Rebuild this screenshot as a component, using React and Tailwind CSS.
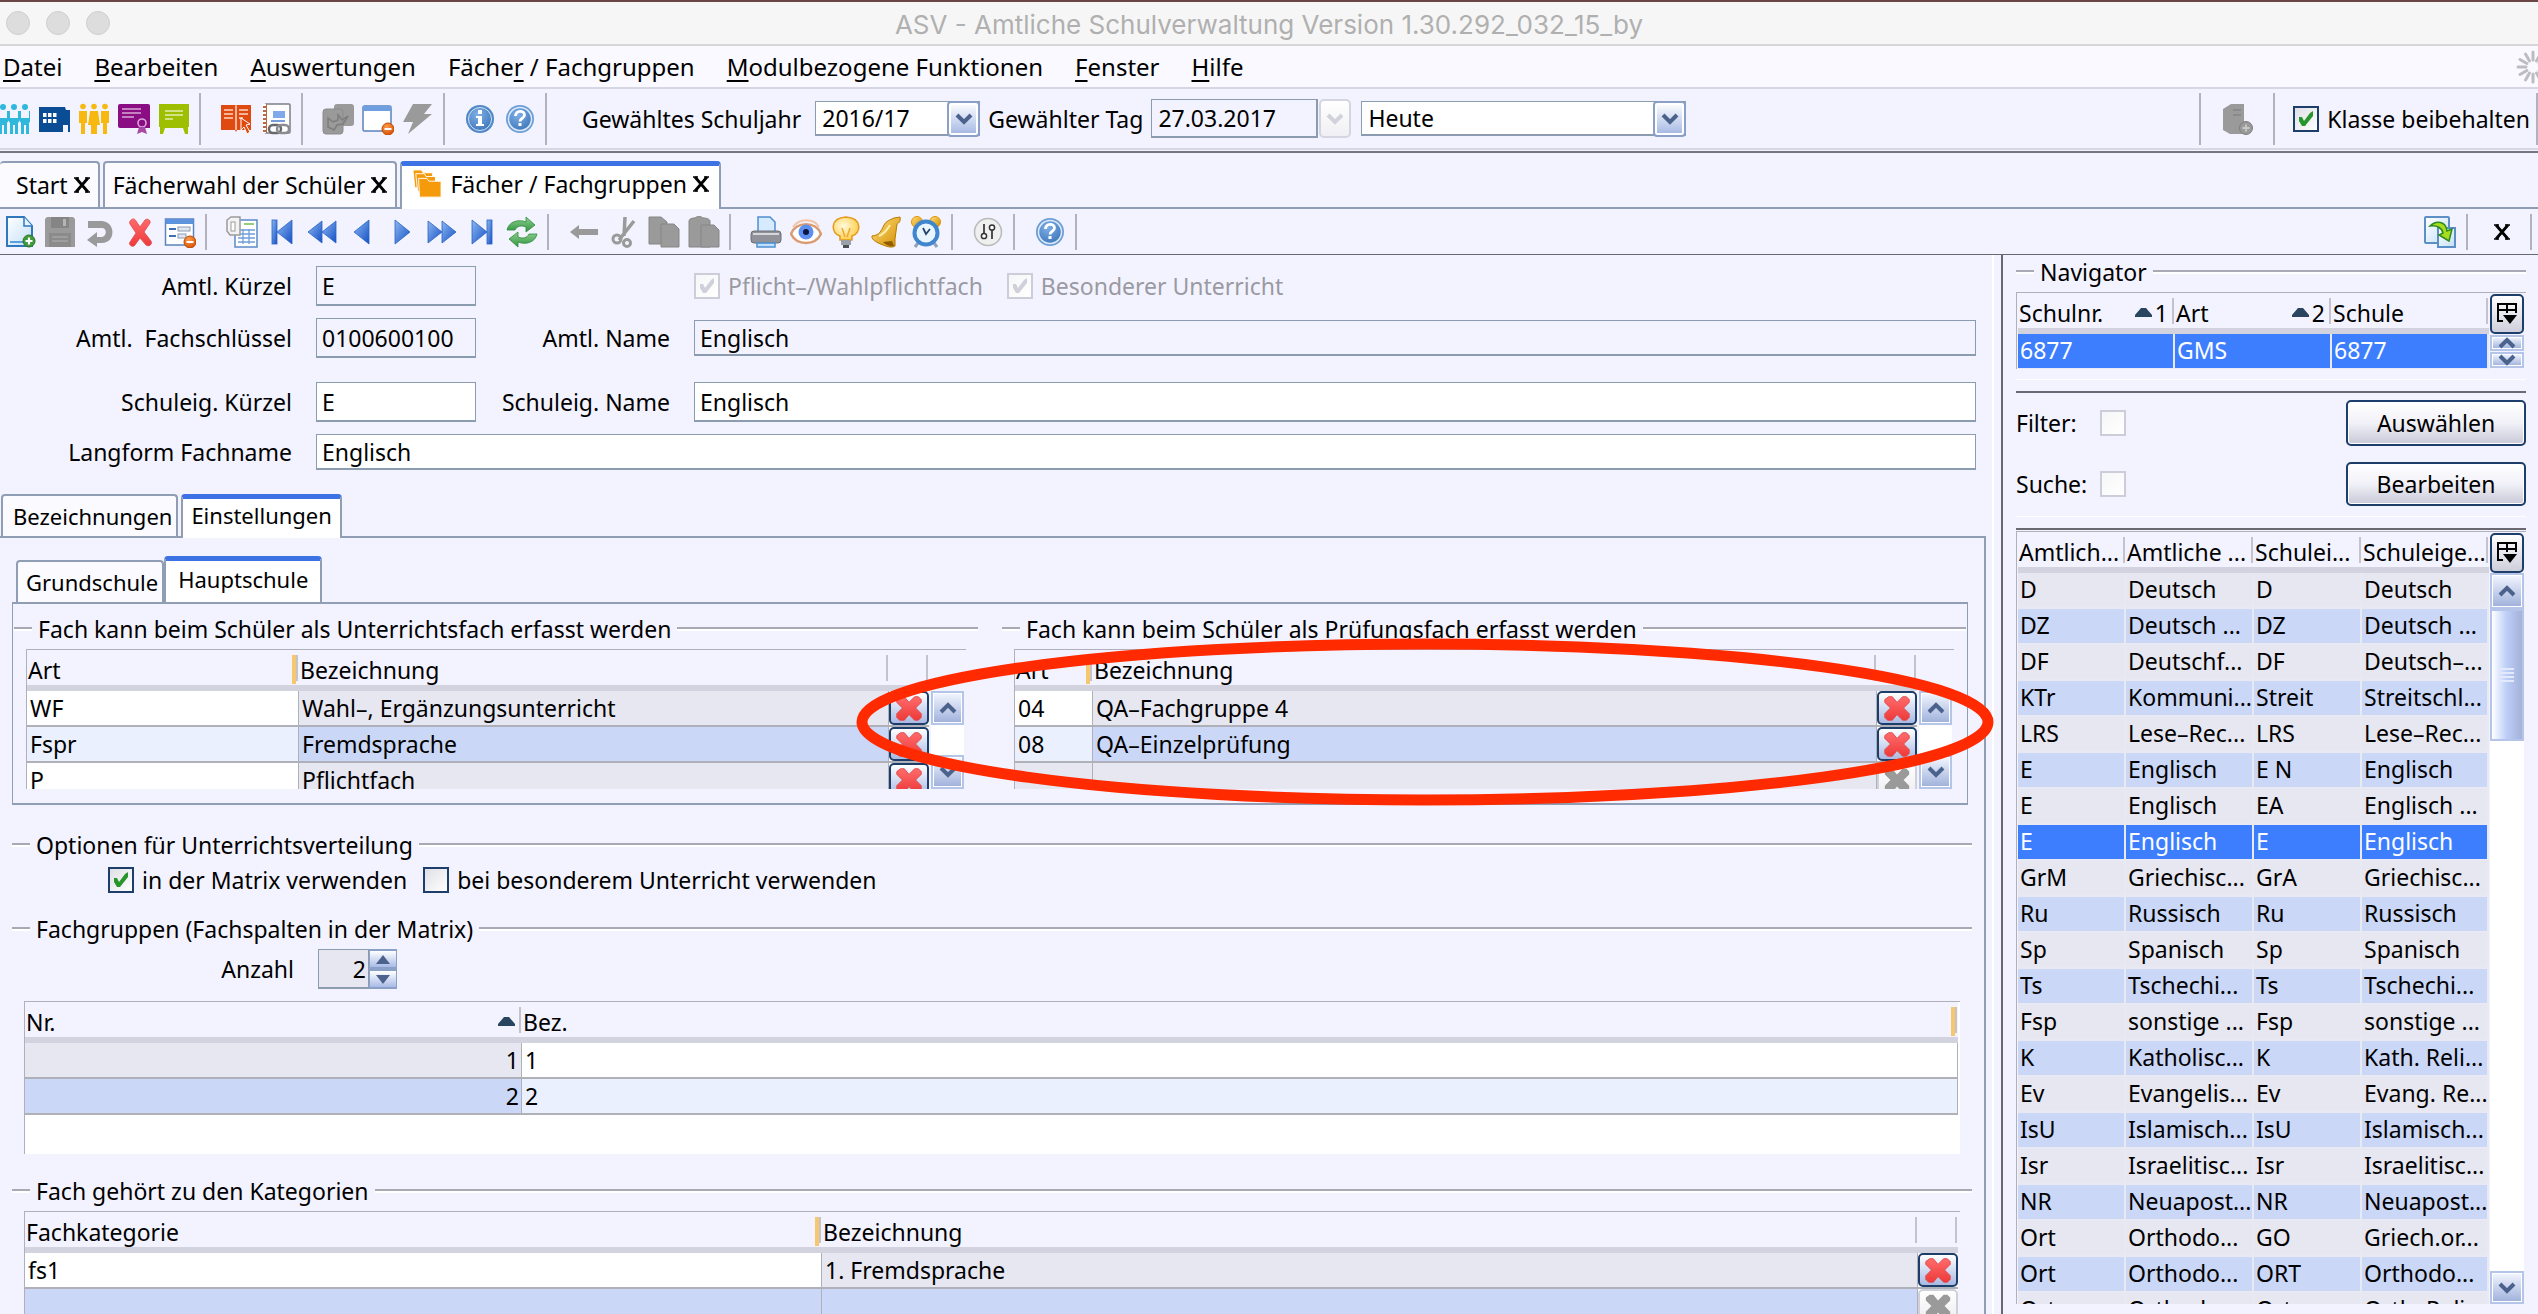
import React from "react";

/* ---------- icons ---------- */

function Svg({ children, size = 32, className = "" }) {
  return (
    <svg width={size} height={size} viewBox="0 0 32 32" className={"shrink-0 " + className} aria-hidden="true">
      {children}
    </svg>
  );
}

const G = "#9a9a9a";

function Gradients() {
  return (
    <svg width="0" height="0" className="absolute" aria-hidden="true">
      <defs>
        <linearGradient id="navBlue" x1="0" y1="0" x2="1" y2="1">
          <stop offset="0" stopColor="#8db8f2" />
          <stop offset="1" stopColor="#1450c4" />
        </linearGradient>
        <linearGradient id="redX" x1="0" y1="0" x2="0" y2="1">
          <stop offset="0" stopColor="#ff6b6b" />
          <stop offset="1" stopColor="#ee3a3a" />
        </linearGradient>
        <radialGradient id="blueBall" cx=".4" cy=".3" r=".8">
          <stop offset="0" stopColor="#7fb0e6" />
          <stop offset="1" stopColor="#3a73b8" />
        </radialGradient>
        <linearGradient id="paper" x1="0" y1="0" x2="1" y2="1">
          <stop offset="0" stopColor="#ffffff" />
          <stop offset="1" stopColor="#c3dff7" />
        </linearGradient>
        <linearGradient id="gold" x1="0" y1="0" x2="1" y2="1">
          <stop offset="0" stopColor="#ffe27a" />
          <stop offset="1" stopColor="#d38a00" />
        </linearGradient>
        <radialGradient id="bulb" cx=".4" cy=".4" r=".7">
          <stop offset="0" stopColor="#fffbe0" />
          <stop offset="1" stopColor="#ffc83a" />
        </radialGradient>
        <linearGradient id="green" x1="0" y1="0" x2="0" y2="1">
          <stop offset="0" stopColor="#8fd08f" />
          <stop offset="1" stopColor="#2f9440" />
        </linearGradient>
        <radialGradient id="orangeBall" cx=".4" cy=".3" r=".8">
          <stop offset="0" stopColor="#ff9a4a" />
          <stop offset="1" stopColor="#d14a00" />
        </radialGradient>
      </defs>
    </svg>
  );
}

const MinusBadge = () => (
  <g>
    <circle cx="26" cy="26" r="6" fill="url(#orangeBall)" stroke="#c04a00" />
    <rect x="22.500" y="25" width="7" height="2" fill="#fff" />
  </g>
);

const ICONS = {
  pupils: (
    <g fill="#2fb8dc">
      {[1, 12, 23].map((x) => (
        <g key={x}>
          <circle cx={x + 4} cy="4" r="3" />
          <path d={`M${x - 2} 8h2v7h8v-7h2v9l-2 3v11h-3v-9h-2v9h-3v-11l-2-3z`} />
        </g>
      ))}
    </g>
  ),
  school: (
    <g>
      <path fill="#0b4d94" d="M1 4h26l1 3h4v22h-2v-7h-5v7H1z" />
      <g fill="#fff">
        {[5, 10, 15].map((x) => (
          <React.Fragment key={x}>
            <rect x={x} y="10" width="3.500" height="4" />
            <rect x={x} y="16" width="3.500" height="4" />
          </React.Fragment>
        ))}
      </g>
    </g>
  ),
  people: (
    <g fill="#f7b90f">
      {[5, 16, 27].map((x, i) => (
        <g key={x}>
          <circle cx={x} cy="3.500" r="2.800" />
          <path d={i === 1 ? "M12 8h8l2 14h-3v9h-6v-9h-3z" : `M${x - 4} 8h8v12h-2v11h-4v-11h-2z`} />
        </g>
      ))}
    </g>
  ),
  certificate: (
    <g>
      <path fill="#8a0d84" d="M2 1h28a2 2 0 0 1 2 2v22H2a2 2 0 0 1-2-2V3a2 2 0 0 1 2-2z" />
      <path stroke="#d9a6d6" strokeWidth="1.600" d="M4 6h19M4 10h19M4 14h12" />
      <circle cx="24" cy="20" r="4" fill="#8a0d84" stroke="#d9a6d6" strokeWidth="1.600" />
      <path d="M21 24l-2 7 5-2 5 2-2-7z" fill="#a84aa3" />
    </g>
  ),
  board: (
    <g>
      <path fill="#9dbf00" d="M1 1h30v23h-1v7h-3l-2-6H7l-2 6H2v-7H1z" />
      <path stroke="#e2efb0" strokeWidth="1.600" d="M7 8h18M7 12h18M7 16h8" />
    </g>
  ),
  book: (
    <g>
      <path fill="#e04a10" d="M1 2h14l1 1 1-1h14v25H17l-1 2-1-2H1z" />
      <path stroke="#fbd7c6" strokeWidth="1.500" d="M4 7h9M4 11h9M4 15h9M19 7h9M19 11h9M19 15h4M16 3v24" />
      <path fill="#e04a10" stroke="#fff" d="M21 15l9 6-4 1 4 7-3 2-3-7-3 3z" />
    </g>
  ),
  notebook: (
    <g>
      <rect x="5" y="1" width="25" height="29" rx="1" fill="#fff" stroke="#7d7f86" strokeWidth="1.500" />
      <rect x="3" y="1" width="4" height="29" fill="#b96a45" />
      <path stroke="#fff" strokeDasharray="2 2" strokeWidth="4" d="M4 1v29" />
      <rect x="13" y="8" width="12" height="7" fill="#7fa9ea" />
      <path stroke="#4a7ed0" strokeWidth="1.500" d="M11 18h14" />
      <rect x="9" y="22" width="12" height="8" rx="4" fill="none" stroke="#66686c" strokeWidth="2.500" />
      <rect x="17" y="22" width="12" height="8" rx="4" fill="none" stroke="#8a8c90" strokeWidth="2.500" />
    </g>
  ),
  puzzleGray: (
    <g fill={G}>
      <rect x="12" y="1" width="20" height="22" rx="3" />
      <rect x="1" y="6" width="20" height="25" rx="3" stroke="#8b8b8b" />
      <path fill="none" stroke="#7d7d7d" strokeWidth="1.500" d="M6 15l5 4 5-2v-5l4 5 6-4-5 8-6 1-3 5-6-3z" />
    </g>
  ),
  windowMinus: (
    <g>
      <rect x="1" y="3" width="28" height="25" rx="1.500" fill="#fff" stroke="#5b83bb" strokeWidth="1.500" />
      <rect x="1" y="3" width="28" height="5" fill="#6f9fe0" />
      <MinusBadge />
    </g>
  ),
  bolt: <path fill={G} d="M11 1h19l-8 10h8L6 31l5-12H1z" />,
  info: (
    <g>
      <circle cx="16" cy="16" r="14" fill="#5088c8" />
      <circle cx="16" cy="16" r="11.500" fill="url(#blueBall)" stroke="#cfe2f5" />
      <path fill="#fff" d="M14 7h4v4h-4zM12 13h6v8h2v2h-8v-2h2v-6h-2z" />
    </g>
  ),
  help: (
    <g>
      <circle cx="16" cy="16" r="14" fill="#6d9ed6" />
      <circle cx="16" cy="16" r="11.500" fill="url(#blueBall)" stroke="#dcebf9" strokeWidth="1.500" />
      <path fill="none" stroke="#fff" strokeWidth="2.800" d="M11.500 13c0-6 9-6 9-1 0 3.500-4.500 3-4.500 6.500" />
      <rect x="14.500" y="20" width="3" height="3" fill="#fff" />
    </g>
  ),
  folders: (
    <g fill="#f59b0b" stroke="#fff" strokeWidth="1">
      <path d="M1 1h9l2 3h10v16H3z" />
      <path d="M4 5h9l2 3h10v16H6z" />
      <path d="M7 10h9l2 3h13v17H8z" />
    </g>
  ),
  newDoc: (
    <g>
      <path fill="url(#paper)" stroke="#2f78bd" strokeWidth="2" d="M3 1h17l8 9v20H3z" />
      <path fill="#e6f3ff" stroke="#2f78bd" strokeWidth="1.500" d="M20 1v9h8" />
      <path stroke="#5aa0de" strokeWidth="2" d="M6 26h14" />
      <circle cx="25" cy="25" r="6" fill="#3f9a3a" stroke="#2c7229" />
      <path stroke="#fff" strokeWidth="2.200" d="M25 21.500v7M21.500 25h7" />
    </g>
  ),
  save: (
    <g>
      <path fill={G} d="M3 1h26l2 2v28H1V3z" />
      <rect x="7" y="1" width="18" height="11" fill="#858585" />
      <rect x="19" y="3" width="3" height="7" fill="#b5b5b5" />
      <rect x="5" y="17" width="22" height="14" fill="#8b8b8b" />
      <path stroke="#a5a5a5" strokeWidth="1.500" d="M8 21h16M8 25h16" />
    </g>
  ),
  undo: <path fill={G} d="M4 5h14c14 1 14 22 0 22h-5v4L3 24l10-8v5h5c5-1 5-9 0-9H4z" />,
  cross: (
    <path
      fill="url(#redX)"
      stroke="#e04848"
      strokeWidth=".8"
      d="M7 4c2-2 4-1 5 1l4 6 5-7c2-2 6 0 5 3l-6 9 7 9c2 4-3 6-5 4l-6-7-5 7c-2 3-7 0-5-3l6-9-6-9c-1-2 0-3 1-4z"
    />
  ),
  fatCross: (
    <path
      fill="url(#redX)"
      stroke="#e04848"
      d="M7 4h4l5 6 6-6h4l3 3v3l-6 6 6 6v4l-3 3h-4l-6-6-5 6H6l-3-3v-4l6-6-6-6V7z"
    />
  ),
  fatCrossGray: <path fill={G} d="M7 4h4l5 6 6-6h4l3 3v3l-6 6 6 6v4l-3 3h-4l-6-6-5 6H6l-3-3v-4l6-6-6-6V7z" />,
  formMinus: (
    <g>
      <rect x="1.500" y="3" width="28" height="26" fill="#fff" stroke="#5b83bb" strokeWidth="1.500" />
      <rect x="1.500" y="3" width="28" height="5" fill="#5d92dd" />
      <path stroke="#3f6fb5" strokeWidth="2" d="M5 13h7M5 20h7" />
      <rect x="14" y="11" width="12" height="4" fill="#dfe6f0" stroke="#8a9bb5" />
      <rect x="14" y="18" width="8" height="4" fill="#dfe6f0" stroke="#8a9bb5" />
      <MinusBadge />
    </g>
  ),
  listDoc: (
    <g>
      <rect x="9" y="4" width="22" height="27" fill="#fff" stroke="#5b8ac6" strokeWidth="1.500" />
      <path stroke="#6fbf4a" strokeWidth="1.500" d="M18 8h10" />
      <path stroke="#6f9fda" strokeWidth="1.300" d="M12 14h17M12 18h17M12 22h17M12 26h17M17 13v15M23 13v15" />
      <path fill="#f3f3f3" stroke="#9c9c9c" strokeWidth="1.500" d="M1 4l4-3h9v18H4l-3-4z" />
      <rect x="5" y="6" width="4" height="9" fill="#fff" stroke="#9c9c9c" />
    </g>
  ),
  first: (
    <g fill="url(#navBlue)" stroke="#2a63c4" strokeWidth=".8">
      <rect x="6" y="4" width="5" height="24" />
      <path d="M26 4v24L11 16z" />
    </g>
  ),
  rewind: (
    <g fill="url(#navBlue)" stroke="#2a63c4" strokeWidth=".8">
      <path d="M16 5v22L2 16z" />
      <path d="M30 5v22L16 16z" />
    </g>
  ),
  prev: <path fill="url(#navBlue)" stroke="#2a63c4" strokeWidth=".8" d="M23 4v24L8 16z" />,
  next: <path fill="url(#navBlue)" stroke="#2a63c4" strokeWidth=".8" d="M9 4v24l15-12z" />,
  forward: (
    <g fill="url(#navBlue)" stroke="#2a63c4" strokeWidth=".8">
      <path d="M2 5v22l14-11z" />
      <path d="M16 5v22l14-11z" />
    </g>
  ),
  last: (
    <g fill="url(#navBlue)" stroke="#2a63c4" strokeWidth=".8">
      <path d="M6 4v24l15-12z" />
      <rect x="21" y="4" width="5" height="24" />
    </g>
  ),
  refresh: (
    <g fill="url(#green)" stroke="#2f8a3c" strokeWidth=".8">
      <path d="M1 14c2-9 12-11 19-8V1l9 8-9 7v-5c-5-2-9-1-11 3z" />
      <path d="M31 18c-2 9-12 11-19 8v5l-9-8 9-7v5c5 2 9 1 11-3z" />
    </g>
  ),
  back: <path fill={G} d="M2 16l9-7v4h19v6H11v4z" />,
  scissors: (
    <g>
      <path stroke={G} strokeWidth="3.500" fill="none" d="M17 1l-1 19M26 5L11 24" />
      <circle cx="9" cy="23" r="4" fill="none" stroke={G} strokeWidth="3" />
      <circle cx="19" cy="27" r="3.500" fill="none" stroke={G} strokeWidth="3" />
    </g>
  ),
  copy: (
    <g fill={G} stroke="#868686">
      <path d="M1 1h12l6 5v22H1z" />
      <path d="M13 8h13l5 5v18H13z" />
    </g>
  ),
  paste: (
    <g fill={G} stroke="#868686">
      <path d="M1 5c0-2 3-3 5-3s3-2 5-2 3 2 5 2 6 1 6 3v26H1z" />
      <path d="M13 9h13l5 5v17H13z" />
    </g>
  ),
  printer: (
    <g>
      <path fill="#d6ebff" stroke="#4f8fd0" strokeWidth="1.500" d="M8 1h12l5 5v10H8z" />
      <rect x="1" y="15" width="30" height="12" rx="3" fill="#8f9299" stroke="#6c6e74" />
      <path stroke="#d5d7da" strokeWidth="2" d="M3 18h26" />
      <path fill="#bfe0ff" stroke="#4f8fd0" strokeWidth="1.500" d="M7 27h18v4H7z" />
    </g>
  ),
  eye: (
    <g>
      <path fill="#fff" stroke="#d99b72" strokeWidth="2.500" d="M1 18C6 5 26 5 31 18 25 30 7 30 1 18z" />
      <path fill="none" stroke="#f2c4a3" strokeWidth="2" d="M3 11C9 2 24 2 29 11" />
      <circle cx="16" cy="16" r="7.500" fill="#5c8ff0" />
      <circle cx="16" cy="16" r="3" fill="#0b1640" />
    </g>
  ),
  bulb: (
    <g>
      <path fill="url(#bulb)" stroke="#e39a1e" strokeWidth="1.500" d="M16 1c17 1 15 17 6 19v4H10v-4C1 18-1 2 16 1z" />
      <path fill="none" stroke="#f0a830" strokeWidth="1.500" d="M12 12l3 9M20 12l-3 9" />
      <rect x="11" y="24" width="10" height="5" fill="#9aa0a8" />
      <rect x="13" y="29" width="6" height="3" fill="#4a4d52" />
    </g>
  ),
  bell: (
    <g>
      <path fill="url(#gold)" stroke="#b87900" d="M24 2l6-1c1 4-1 6-3 7l-2 15v7c-3 2-7 1-12-1S1 24 2 20c8-1 9-5 12-11 2-4 6-5 10-7z" />
      <path fill="#8f5c00" d="M13 26c3 3 7 5 11 4l-2-5z" />
      <path fill="none" stroke="#fff0b0" strokeWidth="2" d="M9 20c5-2 8-6 11-11" />
    </g>
  ),
  clock: (
    <g>
      <path stroke="#8ea3bb" strokeWidth="3" d="M8 27l-3 4M24 27l3 4" />
      <circle cx="7" cy="6" r="5.500" fill="url(#gold)" stroke="#e0930a" />
      <circle cx="25" cy="6" r="5.500" fill="url(#gold)" stroke="#e0930a" />
      <circle cx="16" cy="17" r="11.500" fill="#e8f5ff" stroke="#3f86cf" strokeWidth="4" />
      <path stroke="#27456b" strokeWidth="1.800" fill="none" d="M13 12l3 6 4-5" />
    </g>
  ),
  sliders: (
    <g>
      <circle cx="16" cy="16" r="13.500" fill="#efefef" stroke="#b9b9b9" strokeWidth="1.500" />
      <path stroke="#333" strokeWidth="1.700" d="M12 8v9M20 14v9" />
      <circle cx="12" cy="20" r="2.600" fill="#fff" stroke="#333" strokeWidth="1.500" />
      <circle cx="20" cy="11.500" r="2.600" fill="#fff" stroke="#333" strokeWidth="1.500" />
    </g>
  ),
  dbGray: (
    <g fill={G}>
      <path d="M2 6l8-5h13v30H9l-7-4z" />
      <path stroke="#858585" strokeWidth="1.500" d="M12 7h8M12 12h8" />
      <circle cx="25" cy="25" r="6.500" stroke="#7d7d7d" />
      <path stroke="#c9c9c9" strokeWidth="1.800" d="M25 21.500v7M21.500 25h7" />
    </g>
  ),
  transfer: (
    <g>
      <rect x="1" y="1" width="24" height="26" rx="1" fill="url(#paper)" stroke="#5b8fc6" strokeWidth="2" />
      <path fill="url(#paper)" stroke="#5b8fc6" strokeWidth="2" d="M14 12h17v19H14z" />
      <path fill="#a8dc1e" stroke="#2e8b1f" strokeWidth="1.500" d="M6 10c6-6 16-5 17 5l5-2-3 12-10-6 4-2c-1-5-6-8-13-7z" />
    </g>
  ),
};

const Icon = ({ name, size = 32 }) => <Svg size={size}>{ICONS[name]}</Svg>;

const Chevron = ({ up = false, className = "text-[#4b638c]" }) => (
  <svg width="18" height="12" viewBox="0 0 18 12" className={"shrink-0 " + className} aria-hidden="true">
    <path fill="none" stroke="currentColor" strokeWidth="4" d={up ? "M2 10l7-7 7 7" : "M2 2l7 7 7-7"} />
  </svg>
);

const CloseX = () => (
  <svg width="16" height="16" viewBox="0 0 16 16" className="shrink-0" aria-hidden="true">
    <path stroke="#000" strokeWidth="2.800" d="M2 1l12 14M14 1L2 15" />
    <path stroke="#000" strokeWidth="1.500" d="M0 1h5M11 1h5M0 15h5M11 15h5" />
  </svg>
);

const SortUp = () => (
  <svg width="17" height="9" viewBox="0 0 17 9" className="shrink-0" aria-hidden="true">
    <path fill="#2a4560" d="M6 0h5l6 7v2H0V7z" />
  </svg>
);

/* ---------- basic controls ---------- */

function Tool({ icon, label, disabled }) {
  return (
    <button type="button" aria-label={label} disabled={disabled} className="flex h-10 w-10 shrink-0 items-center justify-center">
      <Icon name={icon} />
    </button>
  );
}

function Divider({ tall }) {
  return <div className={(tall ? "h-[52px]" : "h-9") + " mr-[15px] ml-[5px] w-[2px] shrink-0 bg-[#b3b1bd]"} />;
}

function Check({ id, label, checked, disabled }) {
  return (
    <label htmlFor={id} className={"flex items-center gap-2 " + (disabled ? "text-[#9a9aa2]" : "")}>
      <span className="grid h-[26px] w-[26px] shrink-0 place-items-center">
        <input
          id={id}
          type="checkbox"
          defaultChecked={checked}
          disabled={disabled}
          className="col-start-1 row-start-1 h-[26px] w-[26px] appearance-none border-2 border-[#1d3d6b] bg-linear-to-br from-[#dfe0e6] to-white disabled:border-[#cdcdda] disabled:from-[#f6f6f8]"
        />
        {checked && (
          <svg width="18" height="18" viewBox="0 0 18 18" className="pointer-events-none col-start-1 row-start-1" aria-hidden="true">
            <path fill={disabled ? "#d0d0da" : "#27952b"} d="M2 7h3l2 4 6-8 3-2v5l-8 10H5L2 11z" />
          </svg>
        )}
      </span>
      {label && <span className="whitespace-nowrap">{label}</span>}
    </label>
  );
}

const inputBase = "min-w-0 w-full border border-b-2 border-[#8b9bb0] px-[5px] outline-none";

function Label({ htmlFor, children }) {
  return (
    <label htmlFor={htmlFor} className="text-right whitespace-nowrap">
      {children}
    </label>
  );
}

function Combo({ id, value, options, width, disabled }) {
  return (
    <div className={"relative flex h-9 shrink-0 " + width}>
      <select
        id={id}
        disabled={disabled}
        defaultValue={value}
        className="h-[35px] w-full appearance-none border border-b-2 border-[#8b9bb0] bg-white px-1.5 text-black outline-none"
      >
        {options.map((o) => (
          <option key={o}>{o}</option>
        ))}
      </select>
      <span className="pointer-events-none absolute top-0 right-0 flex h-9 w-[33px] items-center justify-center rounded-[4px] border-2 border-[#8aa0c8] bg-linear-to-b from-white to-[#a3b6e3] ring-2 ring-white ring-inset">
        <Chevron />
      </span>
    </div>
  );
}

function ArrowButton({ up, label, className = "h-[33px]" }) {
  return (
    <button
      type="button"
      aria-label={label}
      className={"flex w-full shrink-0 items-center justify-center border-2 border-[#b5c5ea] bg-linear-to-b from-[#f3f6ff] to-[#9fb0da] ring-1 ring-white ring-inset " + className}
    >
      <Chevron up={up} />
    </button>
  );
}

function Section({ title, children, className = "" }) {
  return (
    <section className={"min-w-0 " + className}>
      <div className="flex h-[30px] items-center">
        <div className="h-1 w-[18px] border-t-2 border-[#a9a9b3] bg-white" />
        <h2 className="px-1.5 whitespace-nowrap">{title}</h2>
        <div className="h-1 flex-1 border-t-2 border-[#a9a9b3] bg-white" />
      </div>
      {children}
    </section>
  );
}

/* ---------- tables ---------- */

function Th({ children, mark, sort, line = true }) {
  return (
    <th scope="col" className="border-b-[6px] border-[#d3d3e0] p-0 text-left font-normal">
      <div className="flex h-[35px] items-center">
        <span className="min-w-0 flex-1 pt-1 pl-px whitespace-nowrap">{children}</span>
        {sort !== undefined && (
          <span className="flex items-center gap-[3px] pt-1 pr-1">
            <SortUp />
            {sort}
          </span>
        )}
        {mark && <span className="mt-1 h-[29px] w-1 bg-[#f6c76c]" />}
        {line && <span className="mr-px h-[26px] w-[2px] bg-[#c3c3ce]" />}
      </div>
    </th>
  );
}

const cellTone = {
  white: "bg-white",
  pale: "bg-[#eaf0fe]",
  gray: "bg-[#e7e7f1]",
  blue: "bg-[#cad7f7]",
};

function Td({ children, tone = "white", right }) {
  return (
    <td
      className={
        "h-9 border-r border-b-2 border-[#b0b0b8] p-0 whitespace-nowrap " + (right ? "pr-0.5 text-right " : "pl-[3px] ") + cellTone[tone]
      }
    >
      {children}
    </td>
  );
}

function DeleteCell({ disabled }) {
  return (
    <td className="h-9 border-b-2 border-[#b0b0b8] bg-white p-0">
      <button
        type="button"
        aria-label="Zeile löschen"
        disabled={disabled}
        className="flex h-[34px] w-full items-center justify-center rounded-[5px] border-2 border-[#1d3d6b] bg-linear-to-b from-white to-[#a9b9e2] disabled:border-[#d0d0da] disabled:to-[#ededf2]"
      >
        <Icon name={disabled ? "fatCrossGray" : "fatCross"} size={30} />
      </button>
    </td>
  );
}

function SubjectTable({ rows, artWidth }) {
  return (
    <div className="mx-3 mt-[5px] flex h-[140px] overflow-hidden border-t border-l border-[#b0b0bc]">
      <div className="min-w-0 flex-1">
        <table className="w-full table-fixed border-separate border-spacing-0">
          <colgroup>
            <col className={artWidth} />
            <col />
            <col className="w-10" />
          </colgroup>
          <thead>
            <tr>
              <Th mark>Art</Th>
              <Th>Bezeichnung</Th>
              <Th />
            </tr>
          </thead>
          <tbody>
            {rows.map(([art, name], i) => (
              <tr key={i}>
                <Td tone={name === "" ? "gray" : i % 2 ? "pale" : "white"}>{art}</Td>
                <Td tone={i % 2 ? "blue" : "gray"}>{name}</Td>
                <DeleteCell disabled={name === ""} />
              </tr>
            ))}
          </tbody>
        </table>
      </div>
      <div className="flex w-[37px] flex-col justify-between pt-[41px] pr-0.5 pl-[2px]">
        <ArrowButton up label="Nach oben" className="h-[34px]" />
        <div className="flex-1 bg-white" />
        <ArrowButton label="Nach unten" className="h-[34px]" />
      </div>
    </div>
  );
}

const navRows = [
  ["D", "Deutsch", "D", "Deutsch"],
  ["DZ", "Deutsch ...", "DZ", "Deutsch ..."],
  ["DF", "Deutschf...", "DF", "Deutsch–..."],
  ["KTr", "Kommuni...", "Streit", "Streitschl..."],
  ["LRS", "Lese–Rec...", "LRS", "Lese–Rec..."],
  ["E", "Englisch", "E N", "Englisch"],
  ["E", "Englisch", "EA", "Englisch ..."],
  ["E", "Englisch", "E", "Englisch"],
  ["GrM", "Griechisc...", "GrA", "Griechisc..."],
  ["Ru", "Russisch", "Ru", "Russisch"],
  ["Sp", "Spanisch", "Sp", "Spanisch"],
  ["Ts", "Tschechi...", "Ts", "Tschechi..."],
  ["Fsp", "sonstige ...", "Fsp", "sonstige ..."],
  ["K", "Katholisc...", "K", "Kath. Reli..."],
  ["Ev", "Evangelis...", "Ev", "Evang. Re..."],
  ["IsU", "Islamisch...", "IsU", "Islamisch..."],
  ["Isr", "Israelitisc...", "Isr", "Israelitisc..."],
  ["NR", "Neuapost...", "NR", "Neuapost..."],
  ["Ort", "Orthodo...", "GO", "Griech.or..."],
  ["Ort", "Orthodo...", "ORT", "Orthodo..."],
  ["Ort", "Orthodo...", "Ort", "Orth. Reli..."],
];

function NavCell({ children, tone }) {
  return <td className={"h-9 border-r-2 border-b-2 border-[#e9e9f3] p-0 pb-[2px] pl-[2px] whitespace-nowrap " + tone}>{children}</td>;
}

function ColumnButton() {
  return (
    <button
      type="button"
      aria-label="Spalten auswählen"
      className="flex h-10 w-full shrink-0 items-center justify-center rounded-[5px] border-2 border-[#1d3d6b] bg-linear-to-b from-white to-[#cfcfdc]"
    >
      <svg width="20" height="22" viewBox="0 0 20 22" aria-hidden="true">
        <path fill="none" stroke="#000" strokeWidth="2" d="M1 19V1h18v9M1 7h18M10 1v9M1 18h5" />
        <path fill="#000" d="M6 12h14l-7 9z" />
      </svg>
    </button>
  );
}

/* ---------- tabs ---------- */

function Tab({ active, closable, icon, children, className = "" }) {
  return (
    <div
      className={
        "flex shrink-0 items-center gap-1.5 rounded-t-[4px] border-x-2 border-[#8f9eb5] whitespace-nowrap " +
        (active ? "relative -mb-[2px] border-t-[5px] border-t-[#3d72e4] bg-white pb-2 " : "border-t-2 bg-[#fafaff] ") +
        className
      }
    >
      <button type="button" className="flex items-center gap-2 leading-7">
        {icon && <Icon name={icon} size={30} />}
        {children}
      </button>
      {closable && (
        <button type="button" aria-label={children + " schließen"}>
          <CloseX />
        </button>
      )}
    </div>
  );
}

/* ---------- page ---------- */

const menus = [
  ["", "D", "atei"],
  ["", "B", "earbeiten"],
  ["", "A", "uswertungen"],
  ["Fäche", "r", " / Fachgruppen"],
  ["", "M", "odulbezogene Funktionen"],
  ["", "F", "enster"],
  ["", "H", "ilfe"],
];

function Header() {
  return (
    <header className="shrink-0">
      <div className="grid h-[46px] grid-cols-[1fr_auto_1fr] items-center border-t-2 border-b-2 border-t-[#6b4646] border-b-[#d6d6d8] bg-[#f6f6f6]">
        <div className="flex gap-4 pl-1.5">
          {["Schließen", "Minimieren", "Maximieren"].map((n) => (
            <button key={n} type="button" aria-label={n} className="h-6 w-6 rounded-full border border-[#cfcfcf] bg-[#dddddd]" />
          ))}
        </div>
        <h1 className="pt-1 font-['Inter',sans-serif] text-[26px] leading-8 text-[#b0b0b0]">
          ASV - Amtliche Schulverwaltung Version 1.30.292_032_15_by
        </h1>
      </div>
      <nav className="flex h-[43px] items-center gap-8 overflow-hidden border-b-2 border-[#d6d6e4] bg-[#f9f9ff] pl-[3px] text-2xl leading-8">
        {menus.map(([pre, key, post]) => (
          <button key={key + post} type="button" className="shrink-0 whitespace-pre">
            {pre}
            <u className="decoration-2 underline-offset-4">{key}</u>
            {post}
          </button>
        ))}
        <svg width="36" height="36" viewBox="-18 -18 36 36" className="-mr-[13px] ml-auto shrink-0" aria-hidden="true">
          {[0, 30, 60, 90, 120, 150, 180, 210, 240, 270, 300, 330].map((a) => (
            <path key={a} stroke="#bcbcc2" strokeWidth="3" strokeLinecap="round" d="M0-7V-15" transform={`rotate(${a})`} />
          ))}
        </svg>
      </nav>
      <div className="flex h-[61px] items-center overflow-hidden border-b-2 border-[#d6d6e4]">
        <div className="-ml-1.5 flex items-center">
          <Tool icon="pupils" label="Schüler" />
          <Tool icon="school" label="Schule" />
          <Tool icon="people" label="Lehrkräfte" />
          <Tool icon="certificate" label="Zeugnisse" />
          <Tool icon="board" label="Klassen" />
          <Divider tall />
          <Tool icon="book" label="Unterricht" />
          <Tool icon="notebook" label="Verzeichnis" />
          <Divider tall />
          <Tool icon="puzzleGray" label="Module" disabled />
          <Tool icon="windowMinus" label="Fenster schließen" />
          <Tool icon="bolt" label="Aktion" disabled />
          <Divider tall />
          <Tool icon="info" label="Info" />
          <Tool icon="help" label="Hilfe" />
          <Divider tall />
        </div>
        <div className="flex items-center pl-5">
          <label htmlFor="jahr" className="whitespace-nowrap">
            Gewähltes Schuljahr
          </label>
          <div className="ml-3.5">
            <Combo id="jahr" value="2016/17" options={["2016/17"]} width="w-[165px]" />
          </div>
          <label htmlFor="tag" className="ml-2 whitespace-nowrap">
            Gewählter Tag
          </label>
          <input id="tag" readOnly defaultValue="27.03.2017" className="ml-2 h-[39px] w-[167px] border border-r-2 border-b-2 border-[#8b9bb0] px-1.5" />
          <button
            type="button"
            disabled
            aria-label="Kalender"
            className="ml-px flex h-[39px] w-8 items-center justify-center rounded-[5px] border-2 border-[#d5d5e0] bg-linear-to-b from-white to-[#f0f0f4]"
          >
            <Chevron className="text-[#d2d2dc]" />
          </button>
          <div className="ml-2.5">
            <Combo id="heute" value="Heute" options={["Heute"]} width="w-[325px]" />
          </div>
        </div>
        <div className="ml-auto flex items-center">
          <div className="h-[52px] w-[2px] bg-[#b3b1bd]" />
          <div className="px-4">
            <Tool icon="dbGray" label="Daten" disabled />
          </div>
          <div className="mr-[18px] h-[52px] w-[2px] bg-[#b3b1bd]" />
          <Check id="klasse" label="Klasse beibehalten" checked />
          <div className="ml-1.5 h-[52px] w-[2px] bg-[#b3b1bd]" />
        </div>
      </div>
      <div className="h-[3px] border-b-2 border-[#77747f]" />
    </header>
  );
}

function ModuleBar() {
  return (
    <div className="shrink-0">
      <div className="flex h-14 items-end border-b-2 border-[#8f9eb5]">
        <Tab closable className="mr-[3px] h-[46px] border-l-0 pr-2 pl-4">
          Start
        </Tab>
        <Tab closable className="mr-[3px] h-[46px] px-2">
          Fächerwahl der Schüler
        </Tab>
        <Tab active closable icon="folders" className="h-12 px-2.5">
          Fächer / Fachgruppen
        </Tab>
      </div>
      <div className="flex h-[46px] items-center border-b border-[#6a6870]">
        <Tool icon="newDoc" label="Neu" />
        <Tool icon="save" label="Speichern" disabled />
        <Tool icon="undo" label="Rückgängig" disabled />
        <Tool icon="cross" label="Löschen" />
        <Tool icon="formMinus" label="Formular schließen" />
        <Divider />
        <Tool icon="listDoc" label="Liste" />
        <Tool icon="first" label="Erster" />
        <Tool icon="rewind" label="Zurückspulen" />
        <Tool icon="prev" label="Voriger" />
        <Tool icon="next" label="Nächster" />
        <Tool icon="forward" label="Vorspulen" />
        <Tool icon="last" label="Letzter" />
        <Tool icon="refresh" label="Aktualisieren" />
        <Divider />
        <Tool icon="back" label="Zurück" disabled />
        <Tool icon="scissors" label="Ausschneiden" disabled />
        <Tool icon="copy" label="Kopieren" disabled />
        <Tool icon="paste" label="Einfügen" disabled />
        <Divider />
        <Tool icon="printer" label="Drucken" />
        <Tool icon="eye" label="Vorschau" />
        <Tool icon="bulb" label="Tipp" />
        <Tool icon="bell" label="Benachrichtigung" />
        <Tool icon="clock" label="Wiedervorlage" />
        <Divider />
        <Tool icon="sliders" label="Einstellungen" />
        <Divider />
        <Tool icon="help" label="Hilfe" />
        <Divider />
        <div className="ml-auto flex items-center">
          <Tool icon="transfer" label="Übertragen" />
          <div className="mx-1.5 h-9 w-[2px] bg-[#b3b1bd]" />
          <button type="button" aria-label="Schließen" className="flex h-10 w-14 items-center justify-center">
            <CloseX />
          </button>
          <div className="mr-1.5 h-9 w-[2px] bg-[#b3b1bd]" />
        </div>
      </div>
    </div>
  );
}

function MasterForm() {
  return (
    <form className="grid grid-cols-[292px_160px_170px_1fr] items-center gap-x-6 gap-y-3 pt-[11px] pr-4">
      <Label htmlFor="ak">Amtl. Kürzel</Label>
      <input id="ak" readOnly defaultValue="E" className={inputBase + " h-10"} />
      <span />
      <div className="flex items-center gap-6">
        <Check id="pf" label="Pflicht–/Wahlpflichtfach" checked disabled />
        <Check id="bu" label="Besonderer Unterricht" checked disabled />
      </div>

      <Label htmlFor="af">
        <span className="whitespace-pre">Amtl.&nbsp; Fachschlüssel</span>
      </Label>
      <input id="af" readOnly defaultValue="0100600100" className={inputBase + " h-10"} />
      <Label htmlFor="an">Amtl. Name</Label>
      <input id="an" readOnly defaultValue="Englisch" className={inputBase + " h-9"} />

      <div className="mt-3 grid justify-end">
        <Label htmlFor="sk">Schuleig. Kürzel</Label>
      </div>
      <input id="sk" defaultValue="E" className={inputBase + " mt-3 h-10 bg-white"} />
      <div className="mt-3 grid justify-end">
        <Label htmlFor="sn">Schuleig. Name</Label>
      </div>
      <input id="sn" defaultValue="Englisch" className={inputBase + " mt-3 h-10 bg-white"} />

      <Label htmlFor="lf">Langform Fachname</Label>
      <input id="lf" defaultValue="Englisch" className={inputBase + " col-span-3 h-9 bg-white"} />
    </form>
  );
}

function Settings() {
  return (
    <div className="mr-1.5 flex-1 border-t-2 border-r-2 border-[#8f9eb5] pt-[18px] pr-3 pl-3">
      <div className="flex h-[46px] items-end pl-1 text-[22px]">
        <Tab className="h-[42px] pr-1 pl-2">Grundschule</Tab>
        <Tab active className="h-12 px-3">
          Hauptschule
        </Tab>
      </div>
      <div className="relative mr-1 border-x border-t-2 border-b-2 border-[#8f9eb5] px-px pt-2.5 pb-3.5">
        <div className="grid grid-cols-2 gap-6">
          <Section title="Fach kann beim Schüler als Unterrichtsfach erfasst werden">
            <SubjectTable
              artWidth="w-[272px]"
              rows={[
                ["WF", "Wahl–, Ergänzungsunterricht"],
                ["Fspr", "Fremdsprache"],
                ["P", "Pflichtfach"],
              ]}
            />
          </Section>
          <Section title="Fach kann beim Schüler als Prüfungsfach erfasst werden">
            <SubjectTable
              artWidth="w-[78px]"
              rows={[
                ["04", "QA–Fachgruppe 4"],
                ["08", "QA–Einzelprüfung"],
                ["", ""],
              ]}
            />
          </Section>
        </div>
        <svg
          className="pointer-events-none absolute top-[34px] left-[843px] h-[169px] w-[1139px]"
          viewBox="0 0 1139 169"
          aria-hidden="true"
        >
          <ellipse cx="569" cy="84" rx="563" ry="78" fill="none" stroke="#ff2a00" strokeWidth="11" />
        </svg>
      </div>

      <Section title="Optionen für Unterrichtsverteilung" className="mt-[25px]">
        <div className="mt-[7px] flex h-[26px] items-center gap-4 pl-24">
          <Check id="matrix" label="in der Matrix verwenden" checked />
          <Check id="besonders" label="bei besonderem Unterricht verwenden" />
        </div>
      </Section>

      <Section title="Fachgruppen (Fachspalten in der Matrix)" className="mt-[21px]">
        <div className="mt-[5px] flex h-10 items-center">
          <label htmlFor="anzahl" className="w-[282px] text-right">
            Anzahl
          </label>
          <input id="anzahl" readOnly defaultValue="2" className="ml-6 h-10 w-[51px] border border-b-2 border-[#8b9bb0] bg-[#e7e7f1] pr-0.5 text-right" />
          <div className="flex w-7 flex-col">
            {[true, false].map((up) => (
              <button
                key={String(up)}
                type="button"
                aria-label={up ? "Mehr" : "Weniger"}
                className="flex h-5 items-center justify-center border border-y-2 border-[#8aa0c8] bg-linear-to-b from-white to-[#a9bbe6]"
              >
                <svg width="14" height="9" viewBox="0 0 14 9" aria-hidden="true">
                  <path fill="#4b638c" d={up ? "M7 0l7 9H0z" : "M0 0h14L7 9z"} />
                </svg>
              </button>
            ))}
          </div>
        </div>
        <div className="mx-3 mt-3 h-[153px] border-t border-l border-[#b0b0bc] bg-white">
          <table className="w-full table-fixed border-separate border-spacing-0 pr-[2px]">
            <colgroup>
              <col className="w-[497px]" />
              <col />
            </colgroup>
            <thead className="bg-[#f3f3ff]">
              <tr>
                <Th sort="">Nr.</Th>
                <Th mark>Bez.</Th>
              </tr>
            </thead>
            <tbody>
              <tr>
                <Td tone="gray" right>
                  1
                </Td>
                <Td>1</Td>
              </tr>
              <tr>
                <Td tone="blue" right>
                  2
                </Td>
                <Td tone="pale">2</Td>
              </tr>
            </tbody>
          </table>
        </div>
      </Section>

      <Section title="Fach gehört zu den Kategorien" className="mt-[22px]">
        <div className="mx-3 mt-[5px] border-t border-l border-[#b0b0bc]">
          <table className="w-full table-fixed border-separate border-spacing-0 pr-[2px]">
            <colgroup>
              <col className="w-[797px]" />
              <col />
              <col className="w-10" />
            </colgroup>
            <thead>
              <tr>
                <Th mark>Fachkategorie</Th>
                <Th>Bezeichnung</Th>
                <Th />
              </tr>
            </thead>
            <tbody>
              <tr>
                <Td>fs1</Td>
                <Td tone="gray">1. Fremdsprache</Td>
                <DeleteCell />
              </tr>
              <tr>
                <Td tone="blue" />
                <Td tone="blue" />
                <DeleteCell disabled />
              </tr>
            </tbody>
          </table>
        </div>
      </Section>
    </div>
  );
}

function Navigator() {
  const pushButton =
    "w-[180px] rounded-[5px] border-2 border-[#1d3d6b] bg-linear-to-b from-white via-[#f1f1f8] to-[#c9c9d8] ring-1 ring-white ring-inset";
  return (
    <aside className="flex w-[537px] shrink-0 flex-col border-l-2 border-[#6a6870] pr-3 pl-[13px]">
      <Section title="Navigator" className="shrink-0 pt-[2px]">
        <div className="mt-[5px] flex h-[77px] overflow-hidden border-t border-l border-[#b0b0bc] pl-px">
          <div className="min-w-0 flex-1">
            <table className="w-full table-fixed border-separate border-spacing-0">
              <thead>
                <tr>
                  <Th sort="1">Schulnr.</Th>
                  <Th sort="2">Art</Th>
                  <Th>Schule</Th>
                </tr>
              </thead>
              <tbody className="text-white">
                <tr>
                  {["6877", "GMS", "6877"].map((v, i) => (
                    <NavCell key={i} tone="bg-[#3d7eff]">
                      {v}
                    </NavCell>
                  ))}
                </tr>
              </tbody>
            </table>
          </div>
          <div className="flex w-[37px] shrink-0 flex-col gap-px pt-px pr-[2px] pl-px">
            <ColumnButton />
            <ArrowButton up label="Nach oben" className="h-4" />
            <ArrowButton label="Nach unten" className="h-4" />
          </div>
        </div>
      </Section>

      <div className="mt-[10px] h-[14px] shrink-0 border-t border-b-2 border-t-white border-b-[#6a6870]" />
      <div className="mt-[7px] grid shrink-0 grid-cols-[84px_1fr_auto] items-center gap-y-4">
        <label htmlFor="filter">Filter:</label>
        <Check id="filter" disabled />
        <button type="button" className={pushButton + " h-[46px]"}>
          Auswählen
        </button>
        <label htmlFor="suche">Suche:</label>
        <Check id="suche" disabled />
        <button type="button" className={pushButton + " h-11"}>
          Bearbeiten
        </button>
      </div>
      <div className="mt-[10px] h-[14px] shrink-0 border-t border-b-2 border-t-white border-b-[#6a6870]" />

      <div className="mt-px mb-[10px] flex min-h-0 flex-1 overflow-hidden border-t border-l border-[#b0b0bc] pl-px">
        <div className="min-w-0 flex-1">
          <table className="w-full table-fixed border-separate border-spacing-0">
            <colgroup>
              <col className="w-[108px]" />
              <col className="w-[128px]" />
              <col className="w-[108px]" />
              <col />
            </colgroup>
            <thead>
              <tr>
                <Th>Amtlich...</Th>
                <Th>Amtliche ...</Th>
                <Th>Schulei...</Th>
                <Th>Schuleige...</Th>
              </tr>
            </thead>
            <tbody>
              {navRows.map((row, i) => (
                <tr key={i} className={i === 7 ? "text-white" : ""}>
                  {row.map((v, j) => (
                    <NavCell key={j} tone={i === 7 ? "bg-[#3d7eff]" : i % 2 ? "bg-[#cad7f7]" : "bg-[#e7e7f1]"}>
                      {v}
                    </NavCell>
                  ))}
                </tr>
              ))}
            </tbody>
          </table>
        </div>
        <div className="flex w-[37px] shrink-0 flex-col pt-px pr-[2px] pl-px">
          <ColumnButton />
          <div className="flex min-h-0 flex-1 flex-col bg-white">
            <ArrowButton up label="Nach oben" className="h-9" />
            <div className="flex h-[132px] flex-col items-center justify-center gap-[2px] border-2 border-[#b5c5ea] bg-linear-to-r from-white via-[#bccdf7] to-[#a3b2d8]">
              {[0, 1, 2, 3].map((n) => (
                <span key={n} className="h-[2px] w-3.5 bg-[#e3eafc]" />
              ))}
            </div>
            <div className="flex-1" />
            <ArrowButton label="Nach unten" />
          </div>
        </div>
      </div>
    </aside>
  );
}

export default function App() {
  return (
    <div className="flex h-screen flex-col overflow-hidden bg-[#f3f3ff] font-['Noto_Sans','Open_Sans',sans-serif] text-[23px] leading-7 text-black">
      <Gradients />
      <Header />
      <ModuleBar />
      <div className="flex min-h-0 flex-1">
        <main className="flex min-w-0 flex-1 flex-col">
          <MasterForm />
          <div className="mt-6 flex h-[42px] shrink-0 items-end pl-px text-[22px]">
            <Tab className="mr-[3px] h-[42px] pr-1 pl-2.5">Bezeichnungen</Tab>
            <Tab active className="h-11 px-2">
              Einstellungen
            </Tab>
          </div>
          <Settings />
        </main>
        <div className="w-[9px] shrink-0 border-l-2 border-white" />
        <Navigator />
      </div>
    </div>
  );
}
